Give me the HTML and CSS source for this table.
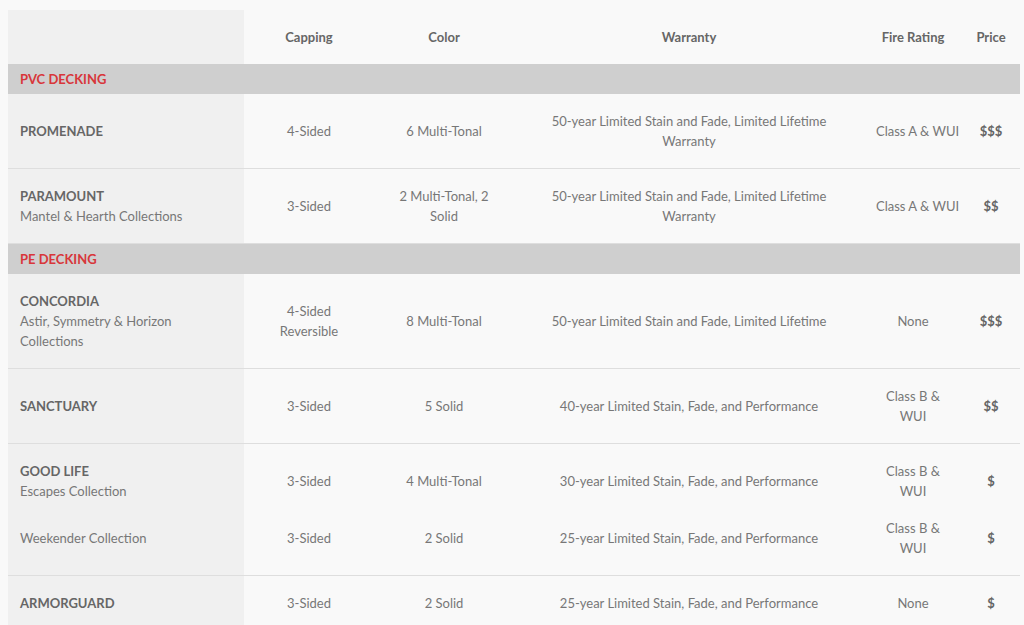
FILE: index.html
```html
<!DOCTYPE html>
<html>
<head>
<meta charset="utf-8">
<link rel="stylesheet" href="styles.css">
</head>
<body>
<table class="compare">
  <colgroup>
    <col class="c-name">
    <col class="c-cap">
    <col class="c-color">
    <col class="c-war">
    <col class="c-fire">
    <col class="c-price">
  </colgroup>
  <thead>
    <tr class="head">
      <th class="name"></th>
      <th>Capping</th>
      <th>Color</th>
      <th>Warranty</th>
      <th>Fire Rating</th>
      <th>Price</th>
    </tr>
  </thead>
  <tbody>
    <tr class="section"><td colspan="6">PVC DECKING</td></tr>
    <tr class="row">
      <td class="name"><b>PROMENADE</b></td>
      <td>4-Sided</td>
      <td>6 Multi-Tonal</td>
      <td>50-year Limited Stain and Fade, Limited Lifetime<br>Warranty</td>
      <td>Class A &amp; WUI</td>
      <td class="price">$$$</td>
    </tr>
    <tr class="row">
      <td class="name"><b>PARAMOUNT</b><br>Mantel &amp; Hearth Collections</td>
      <td>3-Sided</td>
      <td>2 Multi-Tonal, 2<br>Solid</td>
      <td>50-year Limited Stain and Fade, Limited Lifetime<br>Warranty</td>
      <td>Class A &amp; WUI</td>
      <td class="price">$$</td>
    </tr>
    <tr class="section"><td colspan="6">PE DECKING</td></tr>
    <tr class="row">
      <td class="name"><b>CONCORDIA</b><br>Astir, Symmetry &amp; Horizon<br>Collections</td>
      <td>4-Sided<br>Reversible</td>
      <td>8 Multi-Tonal</td>
      <td>50-year Limited Stain and Fade, Limited Lifetime</td>
      <td>None</td>
      <td class="price">$$$</td>
    </tr>
    <tr class="row">
      <td class="name"><b>SANCTUARY</b></td>
      <td>3-Sided</td>
      <td>5 Solid</td>
      <td>40-year Limited Stain, Fade, and Performance</td>
      <td>Class B &amp;<br>WUI</td>
      <td class="price">$$</td>
    </tr>
    <tr class="row open">
      <td class="name"><b>GOOD LIFE</b><br>Escapes Collection</td>
      <td>3-Sided</td>
      <td>4 Multi-Tonal</td>
      <td>30-year Limited Stain, Fade, and Performance</td>
      <td>Class B &amp;<br>WUI</td>
      <td class="price">$</td>
    </tr>
    <tr class="row sub">
      <td class="name">Weekender Collection</td>
      <td>3-Sided</td>
      <td>2 Solid</td>
      <td>25-year Limited Stain, Fade, and Performance</td>
      <td>Class B &amp;<br>WUI</td>
      <td class="price">$</td>
    </tr>
    <tr class="row">
      <td class="name"><b>ARMORGUARD</b></td>
      <td>3-Sided</td>
      <td>2 Solid</td>
      <td>25-year Limited Stain, Fade, and Performance</td>
      <td>None</td>
      <td class="price">$</td>
    </tr>
  </tbody>
</table>
</body>
</html>
```
FILE: styles.css
```css
html, body {
  background: #f9f9f9;
}
body {
  margin: 10px 4px 0 8px;
  font-family: "Lato", "Liberation Sans", sans-serif;
  font-size: 13px;
  line-height: 20px;
  color: #777;
}
.compare {
  width: 1012px;
  border-collapse: collapse;
  table-layout: fixed;
}
.c-name { width: 236px; }
.c-cap { width: 130px; }
.c-color { width: 140px; }
.c-war { width: 350px; }
.c-fire { width: 98px; }
.c-price { width: 58px; }

.compare th, .compare td {
  padding: 17px 12px;
  text-align: center;
  vertical-align: middle;
  white-space: nowrap;
}
.head th {
  height: 54px;
  box-sizing: border-box;
  padding: 0 12px;
  font-weight: 700;
  color: #666;
}
.compare .name {
  background: #f0f0f0;
  text-align: left;
}
.name b {
  color: #666;
  font-weight: 700;
}
.section td {
  background: #cfcfcf;
  color: #d8363a;
  font-weight: 700;
  text-align: left;
  padding: 5px 12px 5px;
}
.row td {
  border-bottom: 1px solid #dedede;
}
.row.open td {
  border-bottom: none;
}
.row.sub td {
  padding-top: 0;
}
.price {
  font-weight: 700;
  color: #666;
}
```
